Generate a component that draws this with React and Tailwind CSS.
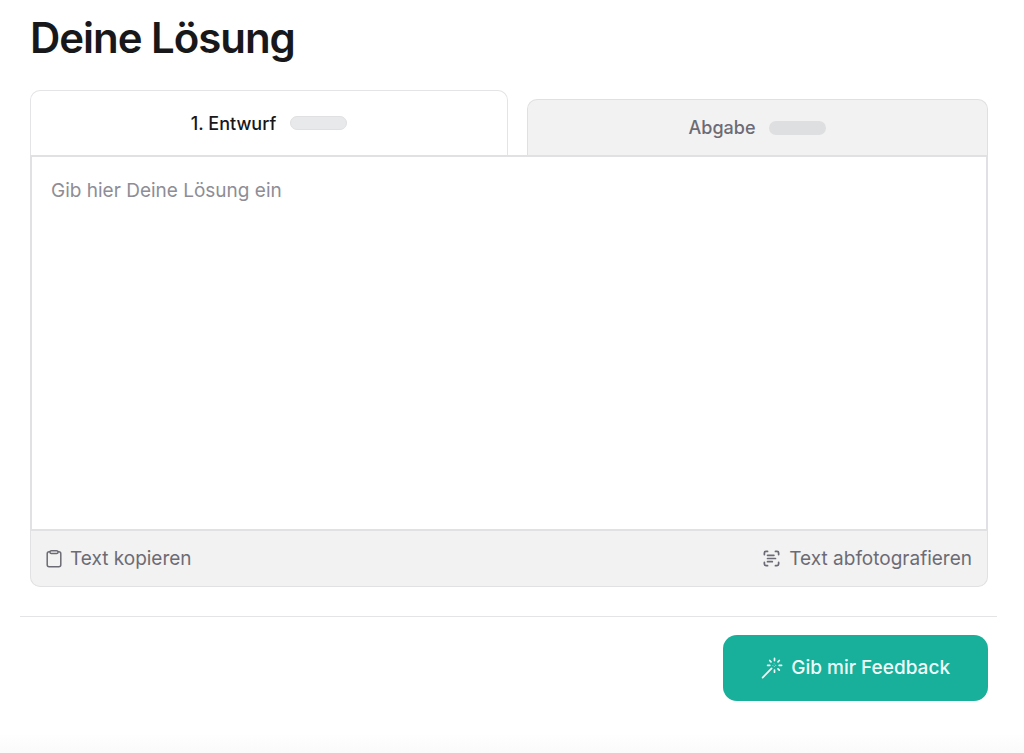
import React, { useState } from 'react'
import { ScanText } from 'lucide-react'

const ClipboardIcon = () => (
  <svg className="h-5 w-4" viewBox="0 0 16 20" fill="none" stroke="currentColor" strokeWidth="1.5" strokeLinejoin="round" aria-hidden="true">
    <path d="M4 2.8H3.2a2 2 0 0 0-2 2v11a2 2 0 0 0 2 2h9.6a2 2 0 0 0 2-2v-11a2 2 0 0 0-2-2H12" />
    <rect x="4" y="1.7" width="8" height="2.8" rx="1.3" />
  </svg>
)

const WandIcon = () => (
  <svg className="h-[22px] w-[22px]" viewBox="0 0 22 22" fill="none" stroke="currentColor" strokeWidth="1.7" strokeLinecap="round" aria-hidden="true">
    <path d="M1.6 20.6l9-9.2" />
    <path d="M13.5 1.4v2.2M13.5 13v2.2M6.6 8.3h2.2M18.2 8.3h2.4M8.7 3.5l1.3 1.3M17 11.8l1.3 1.3M18.3 3.5L17 4.8" />
    <path d="M13.5 6.9l1.4 1.4-1.4 1.4-1.4-1.4z" strokeWidth="0.9" strokeDasharray="0.1 1.9" />
  </svg>
)

export default function App() {
  const [tab, setTab] = useState('draft')
  const [text, setText] = useState('')

  return (
    <div className="flex min-h-screen flex-col bg-white pt-[14px] font-['Inter',sans-serif] text-[#18181b]">
      <main className="flex-1 pl-5 pr-[27px]">
        <div className="pl-[10px] pr-[9px]">
          <h1 className="text-[42px] font-semibold leading-[48px] tracking-tight">Deine Lösung</h1>

          <div role="tablist" className="mt-7 flex items-end gap-[19px]">
            <button
              type="button"
              role="tab"
              aria-selected={tab === 'draft'}
              onClick={() => setTab('draft')}
              className="flex h-[65px] flex-[478] items-center justify-center gap-[14px] rounded-t-[10px] border border-b-0 border-[#e4e4e6] bg-white text-[18px] font-medium"
            >
              1. Entwurf
              <span className="h-[14px] w-[57px] rounded-full border border-[#e0e0e2] bg-[#e8e9eb]" />
            </button>
            <button
              type="button"
              role="tab"
              aria-selected={tab === 'final'}
              onClick={() => setTab('final')}
              className="flex h-[56px] flex-[461] items-center justify-center gap-[14px] rounded-t-[10px] border border-b-0 border-[#e0e0e2] bg-[#f2f2f2] text-[18px] font-medium text-[#6c6b75]"
            >
              Abgabe
              <span className="h-[14px] w-[57px] rounded-full bg-[#dedfe1]" />
            </button>
          </div>

          <textarea
            aria-label="Deine Lösung"
            placeholder="Gib hier Deine Lösung ein"
            value={text}
            onChange={e => setText(e.target.value)}
            className="block h-[376px] w-full resize-none border-2 border-[#e1e1e3] bg-white px-[19px] py-5 text-[19px] leading-[28px] outline-none placeholder:text-[#8e8d96]"
          />

          <div className="flex h-[56px] items-center justify-between rounded-b-[10px] border border-t-0 border-[#e1e1e3] bg-[#f2f2f2] px-[15px] text-[19px] leading-[28px] text-[#6c6b75]">
            <button type="button" className="flex items-center gap-2">
              <ClipboardIcon />
              Text kopieren
            </button>
            <button type="button" className="flex items-center gap-2">
              <ScanText size={19} strokeWidth={2.2} />
              Text abfotografieren
            </button>
          </div>
        </div>

        <hr className="mt-[29px] border-[#e4e4e6]" />

        <div className="mt-[18px] flex justify-end pr-[9px]">
          <button
            type="button"
            className="flex h-[66px] items-center gap-2 rounded-[14px] bg-[#18b09b] px-[38px] text-[19px] font-medium text-[#effbf9]"
          >
            <WandIcon />
            Gib mir Feedback
          </button>
        </div>
      </main>
      <div className="h-5 bg-linear-to-b from-white to-[#fafafa]" />
    </div>
  )
}
